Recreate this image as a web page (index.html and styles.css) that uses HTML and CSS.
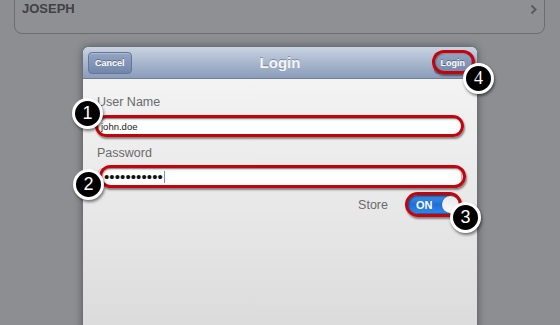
FILE: index.html
```html
<!DOCTYPE html>
<html>
<head>
<meta charset="utf-8">
<link rel="stylesheet" href="styles.css">
</head>
<body>
<div class="card">
  <span class="name">JOSEPH</span>
  <svg class="chev" width="7" height="11" viewBox="0 0 7 11"><path d="M1.5 1.5 L5.5 5.5 L1.5 9.5" fill="none" stroke="#5a5b5f" stroke-width="2"/></svg>
</div>
<div class="modal">
  <div class="bar">
    <button class="btn cancel">Cancel</button>
    <h1 class="title">Login</h1>
    <button class="btn login">Login</button>
  </div>
  <div class="form">
    <div class="label">User Name</div>
    <div class="field">john.doe</div>
    <div class="label">Password</div>
    <div class="field pw"><span class="dots">•••••••••••</span><span class="caret"></span></div>
    <div class="store">
      <span class="label">Store</span>
      <div class="toggle"><span class="on">ON</span><span class="knob"></span></div>
    </div>
  </div>
  <div class="ring r-login"></div>
  <div class="ring r-user"></div>
  <div class="ring r-pw"></div>
  <div class="ring r-toggle"></div>
  <div class="marker m1">1</div>
  <div class="marker m2">2</div>
  <div class="marker m3">3</div>
  <div class="marker m4">4</div>
</div>
</body>
</html>
```
FILE: styles.css
```css
html, body {
  margin: 0;
  padding: 0;
}
body {
  background: #8d8e92;
  font-family: "Liberation Sans", Arial, sans-serif;
  width: 560px;
  height: 325px;
  overflow: hidden;
}
.card {
  margin: -20px 15px 0 14px;
  border: 1px solid #6c6d71;
  border-radius: 8px;
  background: #8f9094;
  display: flex;
  align-items: flex-start;
  justify-content: space-between;
  padding: 20px 7px 0 7px;
  box-sizing: border-box;
  height: 54px;
}
.name {
  font-size: 13px;
  font-weight: bold;
  color: #404144;
  line-height: 15px;
}
.chev {
  margin-top: 3px;
}
.modal {
  position: relative;
  margin: 13px 0 0 83px;
  width: 394px;
  height: 300px;
  border-radius: 6px 6px 0 0;
  background: linear-gradient(#f6f6f6, #e6e6e6 60%, #d9d9d9);
  box-shadow: 0 0 8px rgba(0,0,0,0.45);
}
.bar {
  height: 32px;
  border-radius: 6px 6px 0 0;
  background: linear-gradient(#c9d3e2, #a9b7cd 50%, #8b9dba);
  border-bottom: 1px solid #6f7f99;
  box-sizing: border-box;
  display: grid;
  grid-template-columns: 1fr auto 1fr;
  align-items: center;
  padding: 0 5px;
}
.cancel { justify-self: start; }
.login { justify-self: end; }
.btn {
  height: 22px;
  padding: 0 6px;
  border: 1px solid #62759a;
  border-radius: 4px;
  background: linear-gradient(#94a5c2, #7287ab);
  color: #fff;
  font-family: "Liberation Sans", Arial, sans-serif;
  font-size: 9px;
  font-weight: bold;
  text-shadow: 0 -1px 0 rgba(0,0,0,0.35);
  box-shadow: inset 0 1px 0 rgba(255,255,255,0.25);
}
.title {
  margin: 0;
  font-size: 15px;
  font-weight: bold;
  color: #f4f5f7;
  text-shadow: 0 -1px 0 rgba(0,0,0,0.3);
}
.form {
  padding: 15px 15px 0 14px;
  display: flex;
  flex-direction: column;
}
.label {
  font-size: 12.5px;
  color: #6a6a6a;
  line-height: 16px;
}
.field {
  margin-top: 8px;
  margin-bottom: 9px;
  height: 18px;
  box-sizing: border-box;
  background: #fff;
  border: 1px solid #b9b9b9;
  border-radius: 6px;
  box-shadow: inset 0 1px 2px rgba(0,0,0,0.15);
  font-size: 9.5px;
  color: #1a1a1a;
  line-height: 16px;
  padding-left: 3px;
  display: flex;
  align-items: center;
}
.field.pw {
  margin-top: 7px;
  padding-left: 6px;
}
.dots {
  font-size: 15px;
  letter-spacing: 0.1px;
  line-height: 16px;
  color: #111;
}
.caret {
  display: inline-block;
  width: 1px;
  height: 12px;
  background: #7a8fd8;
  margin-left: 1px;
}
.store {
  display: flex;
  justify-content: flex-end;
  align-items: center;
  gap: 19px;
  padding-right: 2px;
}
.toggle {
  width: 53px;
  height: 19px;
  border-radius: 10px;
  background: linear-gradient(#3f8fe6, #1f6fd6 50%, #2f86ea);
  border: 1px solid #2a5ea8;
  box-sizing: border-box;
  display: flex;
  align-items: center;
  justify-content: space-between;
  padding-left: 8px;
  box-shadow: inset 0 1px 2px rgba(0,0,0,0.3);
}
.on {
  color: #fff;
  font-size: 11px;
  font-weight: bold;
}
.knob {
  width: 17px;
  height: 17px;
  border-radius: 50%;
  background: linear-gradient(#e8e8e8, #fafafa);
  box-shadow: 0 0 1px rgba(0,0,0,0.5);
}
.ring {
  position: absolute;
  border: 3px solid #c5030b;
  border-radius: 999px;
  box-shadow: 1px 2px 2px rgba(0,0,0,0.45), inset 1px 1px 1px rgba(0,0,0,0.25);
  box-sizing: border-box;
}
.r-login { left: 349px; top: 3px; width: 43px; height: 24px; }
.r-user { left: 12px; top: 68px; width: 369px; height: 22px; }
.r-pw { left: 16px; top: 118px; width: 367px; height: 23px; }
.r-toggle { left: 322px; top: 145px; width: 57px; height: 25px; }
.marker {
  position: absolute;
  width: 31px;
  height: 31px;
  box-sizing: border-box;
  border: 3px solid #fff;
  border-radius: 50%;
  background: #000;
  color: #fff;
  font-size: 18px;
  line-height: 25px;
  text-align: center;
  box-shadow: 1px 2px 3px rgba(0,0,0,0.5);
}
.m1 { left: -11px; top: 51px; }
.m2 { left: -10px; top: 122px; }
.m3 { left: 367px; top: 155px; }
.m4 { left: 380px; top: 16px; font-family: "Liberation Serif", serif; }
```
